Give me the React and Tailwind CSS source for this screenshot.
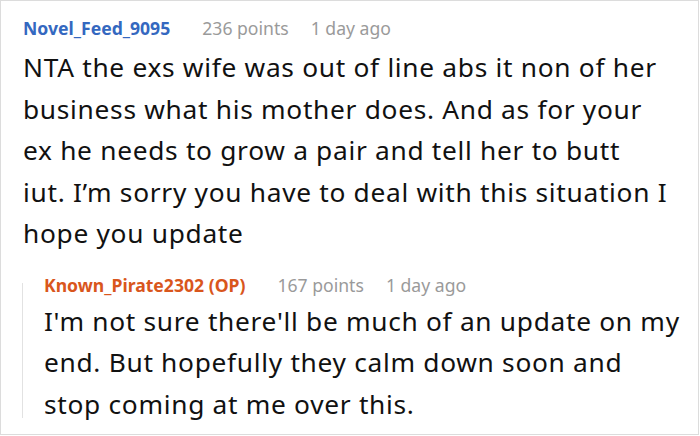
import React from 'react'

const Meta = ({ name, color, points, age }) => (
    <div className="flex items-baseline text-[17.6px] leading-[24px] whitespace-nowrap">
        <span className={`font-bold ${color}`}>{name}</span>
        <span className="ml-[32px] text-[#9a9a9a]">{points} points</span>
        <span className="ml-[22px] text-[#9a9a9a]">{age}</span>
    </div>
)

export default function App() {
    return (
        <div
            className="w-[699px] h-[435px] border border-[#dcdcdc] bg-white pl-[22px] pt-[15px] text-[#111]"
            style={{ fontFamily: '"Noto Sans", "Open Sans", sans-serif' }}
        >
            <Meta name="Novel_Feed_9095" color="text-[#3468c0]" points="236" age="1 day ago" />
            <p className="mt-[7px] text-[26.3px] leading-[41.5px] tracking-[0.7px] whitespace-nowrap">
                NTA the exs wife was out of line abs it non of her<br />
                business what his mother does. And as for your<br />
                ex he needs to grow a pair and tell her to butt<br />
                iut. I’m sorry you have to deal with this situation I<br />
                hope you update
            </p>

            <div className="flex mt-[18px] -ml-[1px]">
                <div className="w-[1px] bg-[#e2e2e2] mt-[10px] mb-[7px]" />
                <div className="pl-[21px]">
                    <Meta name="Known_Pirate2302 (OP)" color="text-[#d9561c]" points="167" age="1 day ago" />
                    <p className="mt-[4px] text-[26.3px] leading-[41.5px] tracking-[0.7px] whitespace-nowrap">
                        I'm not sure there'll be much of an update on my<br />
                        end. But hopefully they calm down soon and<br />
                        stop coming at me over this.
                    </p>
                </div>
            </div>
        </div>
    )
}
